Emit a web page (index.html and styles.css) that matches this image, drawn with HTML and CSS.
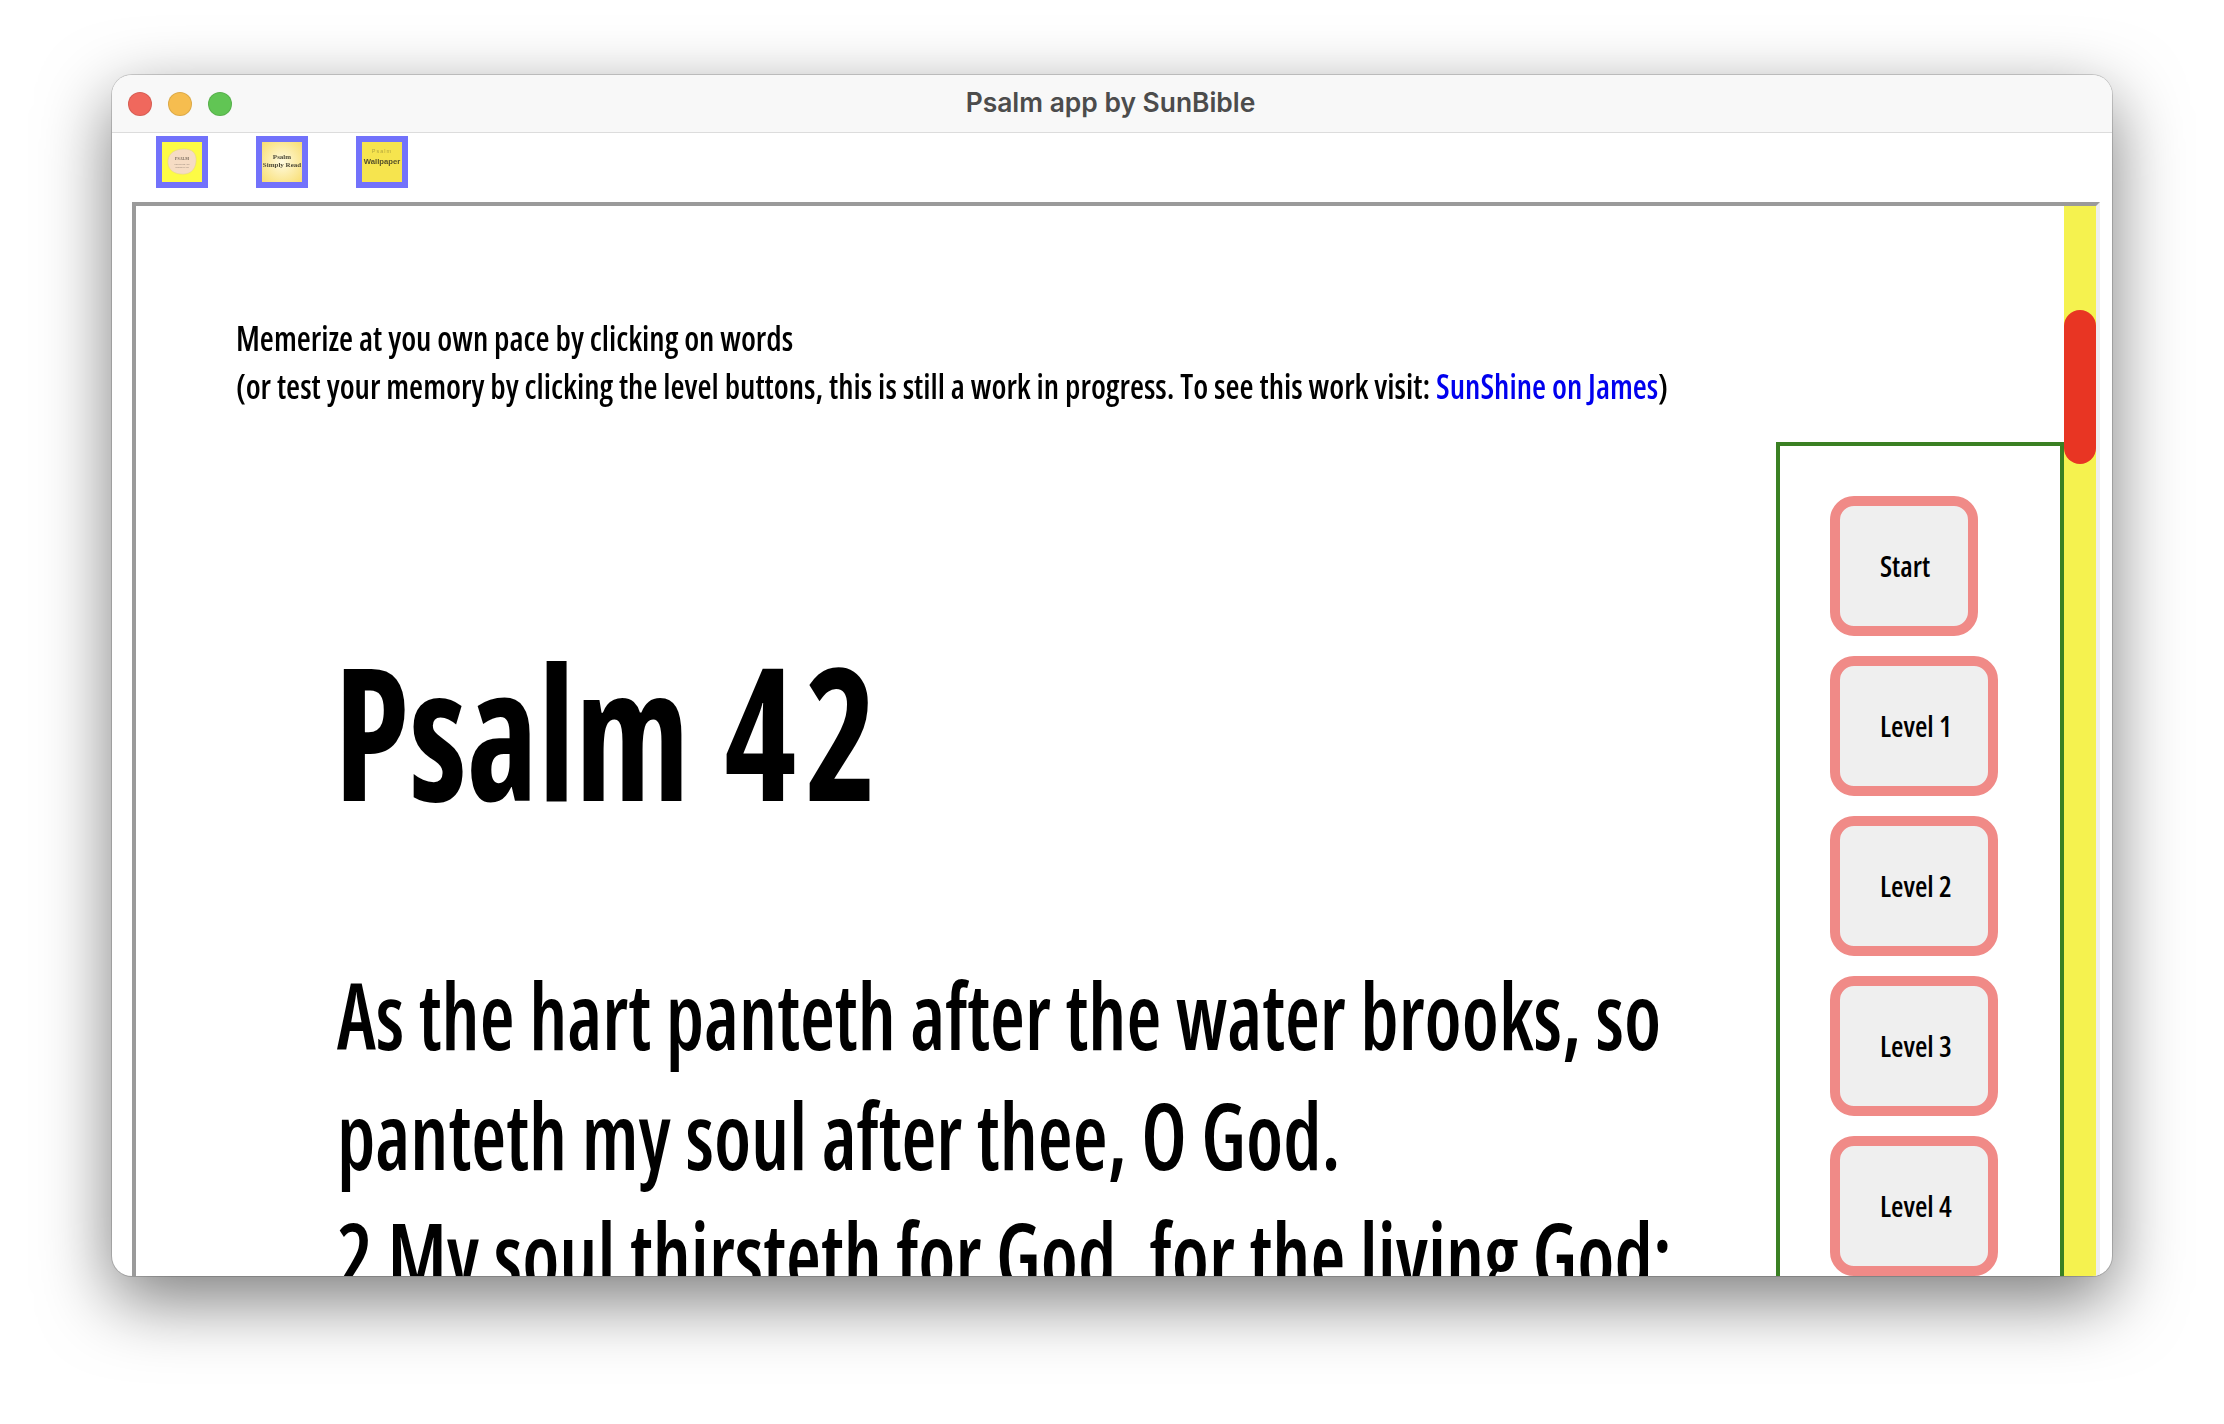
FILE: index.html
```html
<!DOCTYPE html>
<html lang="en">
<head>
	<meta charset="UTF-8">
	<title>Psalm app by SunBible</title>
	<link rel="stylesheet" href="styles.css">
</head>
<body>
<div class="window">
	<div class="titlebar">
		<span class="light red"></span><span class="light yellow"></span><span class="light green"></span>
		<span class="title">Psalm app by SunBible</span>
	</div>
	<div class="thumbs">
		<div class="thumb thumb1">
			<svg viewBox="0 0 40 40" width="40" height="40">
				<path d="M6 18C7 11 13 7 22 7C30 7 35 11 34 20C33 29 27 33 18 32C10 31 5 26 6 18Z" fill="#f6dcc4" stroke="#e3d38e" stroke-width="0.6"/>
				<text x="20" y="18" text-anchor="middle" class="t1-head">PSALM</text>
				<text x="20" y="23" text-anchor="middle" class="t1-sub">MEMORIZE AND</text>
				<text x="20" y="26" text-anchor="middle" class="t1-sub">UNDERSTAND</text>
			</svg>
		</div>
		<div class="thumb thumb2"><span>Psalm</span><span>Simply Read</span></div>
		<div class="thumb thumb3"><span class="t3-a">Psalm</span><span class="t3-b">Wallpaper</span></div>
	</div>
	<div class="frame">
		<div class="main">
			<p class="intro">Memerize at you own pace by clicking on words<br>(or test your memory by clicking the level buttons, this is still a work in progress. To see this work visit: <a href="#">SunShine on James</a>)</p>
			<h1>Psalm <span class="num">42</span></h1>
			<p class="verse">As the hart panteth after the water brooks, so<br>panteth my soul after thee, O God.<br>2 My soul thirsteth for God, for the living God:</p>
		</div>
		<div class="levels">
			<button class="btn btn-start">Start</button>
			<button class="btn">Level 1</button>
			<button class="btn">Level 2</button>
			<button class="btn">Level 3</button>
			<button class="btn">Level 4</button>
		</div>
		<div class="scroll"><div class="scroll-thumb"></div></div>
	</div>
</div>
</body>
</html>
```

FILE: styles.css
```css
html,body{
	margin: 0;
	padding: 0;
	height: 1424px;
	overflow: hidden;
	background: #ffffff;
}
body{
	padding: 75px 112px 0;
	box-sizing: border-box;
	font-family: "Open Sans", "Liberation Sans", sans-serif;
	font-stretch: 75%;
	color: #000000;
}
.window{
	width: 2000px;
	height: 1201px;
	border-radius: 20px;
	background: #ffffff;
	overflow: hidden;
	box-shadow: 0 24px 70px rgba(0,0,0,.52), 0 0 0 1px rgba(0,0,0,.16);
}
.titlebar{
	height: 57px;
	background: #f8f8f8;
	border-bottom: 1px solid #dcdcdc;
	display: flex;
	align-items: center;
	padding-left: 16px;
	gap: 16px;
}
.light{
	width: 24px;
	height: 24px;
	box-sizing: border-box;
	border: 1px solid rgba(0,0,0,.1);
	border-radius: 50%;
}
.red{background: #f0685d;}
.yellow{background: #f6bd4f;}
.green{background: #61c554;}
.title{
	flex: 1;
	padding: 0 139px 3px 0;
	text-align: center;
	font: 600 26.4px "Inter", sans-serif;
	color: #4c4c4c;
}
.thumbs{
	height: 69px;
	display: flex;
	gap: 48px;
	padding: 3px 0 0 44px;
	box-sizing: border-box;
}
.thumb{
	width: 40px;
	height: 40px;
	border: 6px solid #7272fb;
	display: flex;
	flex-direction: column;
	align-items: center;
	overflow: hidden;
	font-family: "Liberation Sans", sans-serif;
	font-stretch: normal;
	font-weight: bold;
	white-space: nowrap;
}
.thumb span, .thumb svg{filter: blur(.35px);}
.thumb1{background: #fdfb45;}
.t1-head{font: bold 4px "Liberation Serif", serif; fill: #77695c;}
.t1-sub{font: 2px "Liberation Sans", sans-serif; fill: #a08f80;}
.thumb2{
	width: 52px;
	height: 52px;
	background: radial-gradient(#fffbe0, #f8dd70);
	justify-content: center;
	padding-bottom: 2px;
	box-sizing: border-box;
	font-family: "Liberation Serif", serif;
	font-size: 7px;
	line-height: 8px;
	color: #4d4a38;
}
.thumb3{
	background: #f6e44e;
	color: #55502a;
}
.t3-a{
	margin-top: 6px;
	font-weight: normal;
	font-size: 5.5px;
	line-height: 7px;
	letter-spacing: 1px;
	color: #b5a83f;
}
.t3-b{
	margin-top: 2px;
	font-size: 7.7px;
	line-height: 10px;
}
.frame{
	margin-left: 20px;
	width: 1968px;
	height: 1200px;
	box-sizing: border-box;
	border: 4px solid;
	border-color: #9a9a9a #eeeeee #eeeeee #9a9a9a;
	display: flex;
}
.main{
	flex: 1;
	min-width: 0;
	padding-left: 100px;
}
.intro{
	margin: 108px 0 0;
	font-size: 35px;
	font-weight: 550;
	line-height: 48px;
	white-space: nowrap;
	transform: scaleX(.92);
	transform-origin: 0 0;
}
.intro a{color: #0000ee; text-decoration: none;}
h1{
	margin: 219px 0 0 98px;
	font-size: 185px;
	font-weight: 700;
	line-height: 200px;
	white-space: nowrap;
	word-spacing: 8px;
	transform: scaleX(.83);
	transform-origin: 0 0;
}
.num{letter-spacing: 11px;}
.verse{
	margin: 126px 0 0 101px;
	font-size: 92px;
	font-weight: 560;
	line-height: 120px;
	white-space: nowrap;
	transform: scaleX(.87);
	transform-origin: 0 0;
}
.levels{
	width: 288px;
	height: 900px;
	flex: none;
	margin-top: 236px;
	box-sizing: border-box;
	border: 4px solid #3a8023;
	padding: 50px 0 0 50px;
	display: flex;
	flex-direction: column;
	align-items: flex-start;
	gap: 20px;
}
.btn{
	width: 168px;
	height: 140px;
	flex: none;
	padding: 0 0 0 40px;
	background: #efefef;
	border: 10px solid #f08a87;
	border-radius: 24px;
	font-family: inherit;
	font-stretch: 75%;
	font-size: 28.5px;
	font-weight: 550;
	text-align: left;
	white-space: nowrap;
	color: #000;
}
.btn-start{width: 148px;}
.scroll{
	width: 32px;
	flex: none;
	background: #f5f24f;
	padding-top: 104px;
	box-sizing: border-box;
}
.scroll-thumb{
	height: 154px;
	background: #e83523;
	border-radius: 16px;
}
```
